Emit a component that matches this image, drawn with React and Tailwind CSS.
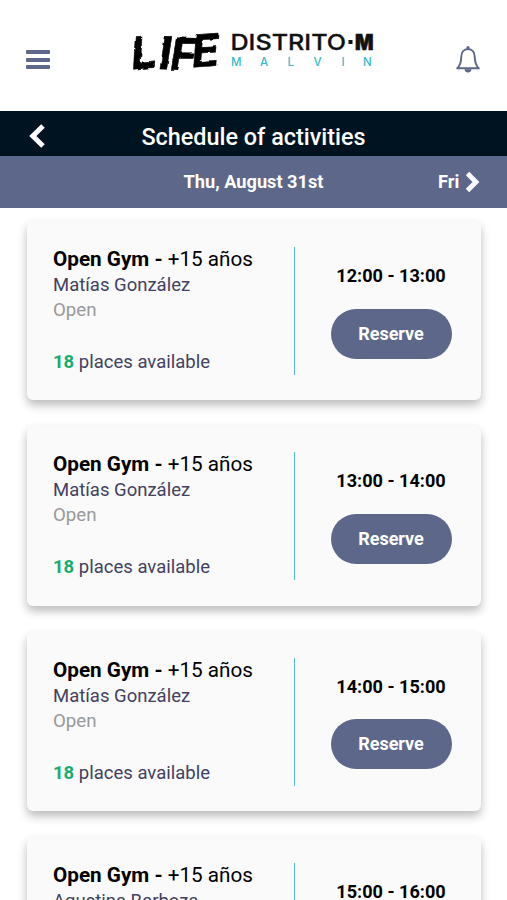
const sessions = [
  { coach: "Matías González", time: "12:00 - 13:00" },
  { coach: "Matías González", time: "13:00 - 14:00" },
  { coach: "Matías González", time: "14:00 - 15:00" },
  { coach: "Agustina Barboza", time: "15:00 - 16:00" },
];

function Logo() {
  return (
    <svg width="248" height="48" viewBox="130 28 248 48" className="overflow-visible">
      <defs>
        <filter id="brush" x="-10%" y="-10%" width="120%" height="120%">
          <feTurbulence type="fractalNoise" baseFrequency="0.12" numOctaves="2" seed="3" result="n" />
          <feDisplacementMap in="SourceGraphic" in2="n" scale="3" xChannelSelector="R" yChannelSelector="G" />
        </filter>
      </defs>
      <g filter="url(#brush)">
        <text
          transform="translate(0 69) skewX(-8)"
          x="130.500 157 168.500 190.500"
          y="0.5 0 1.5 -1.500"
          rotate="-5 1 1 -4"
          fontSize="45"
          fontWeight="700"
          fill="#050505"
          stroke="#050505"
          strokeWidth="0.6"
          strokeLinejoin="round"
          className="font-['Inter',sans-serif]"
        >
          LIFE
        </text>
      </g>
      <text x="230.500" y="49.500" fontSize="21" fontWeight="500" textLength="115.500" lengthAdjust="spacingAndGlyphs" fill="#111" stroke="#111" strokeWidth="0.3" className="font-['Inter',sans-serif]">DISTRITO</text>
      <rect x="348.500" y="40" width="4" height="4" fill="#111" />
      <text x="355" y="49.500" fontSize="21" fontWeight="900" textLength="18.500" lengthAdjust="spacingAndGlyphs" fill="#111" stroke="#111" strokeWidth="0.6" className="font-['Inter',sans-serif]">M</text>
      <text x="231 260 287.500 313.500 341.500 363" y="66" fontSize="11.500" fontWeight="500" fill="#3cb9c6" className="font-['Inter',sans-serif]">MALVIN</text>
    </svg>
  );
}

function SessionCard({ coach, time }) {
  return (
    <article className="flex h-[179.3px] shrink-0 rounded-[6px] bg-[#fafafa] pt-[26px] pl-[26px] shadow-[0_5px_10px_rgba(0,0,0,0.27)]">
      <div className="w-[241px] shrink-0 whitespace-nowrap text-[#42415f]">
        <h2 className="h-[25px] text-[20.7px] leading-[25px] text-black">
          <b className="font-bold">Open Gym - </b>+15 años
        </h2>
        <p className="h-[26px] text-[18.5px] leading-[26px]">{coach}</p>
        <p className="h-[26px] text-[18.7px] leading-[25px] text-[#999]">Open</p>
        <p className="mt-[26px] text-[18.5px] leading-[25px]">
          <b className="font-bold text-[#18ac70]">18</b> places available
        </p>
      </div>
      <div className="h-[128px] w-px shrink-0 bg-[#55bfc3]" />
      <div className="flex flex-1 flex-col items-center pl-[6px]">
        <p className="mt-[16px] text-[18.1px] leading-[25px] font-bold whitespace-nowrap text-black">{time}</p>
        <button className="mt-[20.500px] h-[50px] w-[121px] rounded-full bg-[#5d6789] pb-px text-[18px] font-bold text-white">Reserve</button>
      </div>
    </article>
  );
}

export default function App() {
  return (
    <div className="flex h-[900px] w-full flex-col overflow-hidden bg-white font-['Roboto',sans-serif]">
      <header className="flex h-[111px] shrink-0 items-start justify-between pr-[26px] pl-[26px]">
        <div className="mt-[50px] flex w-6 flex-col gap-[3.5px]">
          <span className="h-[4px] rounded-[1px] bg-[#5d6789]" />
          <span className="h-[4px] rounded-[1px] bg-[#5d6789]" />
          <span className="h-[4px] rounded-[1px] bg-[#5d6789]" />
        </div>
        <div className="mt-7 ml-[3px]">
          <Logo />
        </div>
        <svg className="mt-[45px]" width="26" height="29" viewBox="0 0 26 29" fill="none" stroke="#5d6789" strokeWidth="1.9" strokeLinejoin="round">
          <path d="M2.200 23.300c2.500-2.300 4-5.500 4-11C6.200 7 9 4 13 4s6.800 3 6.800 8.300c0 5.500 1.500 8.700 4 11Z" />
          <path d="M9.500 24.200h7c0 2-1.500 3.200-3.500 3.200s-3.500-1.200-3.500-3.200Z" fill="#5d6789" stroke="none" />
          <circle cx="13" cy="2.700" r="1.600" fill="#5d6789" stroke="none" />
        </svg>
      </header>
      <div className="grid h-[45px] shrink-0 grid-cols-[60px_1fr_60px] items-center bg-[#001321] text-white">
        <svg className="mt-[5px] ml-7" width="18" height="26" viewBox="0 0 18 26" fill="none" stroke="white" strokeWidth="5">
          <path d="M15 3 4.800 13l10.200 10" />
        </svg>
        <h1 className="mt-[6px] text-center text-[23.4px] leading-[28px] font-medium whitespace-nowrap">Schedule of activities</h1>
      </div>
      <nav className="grid h-[52px] shrink-0 grid-cols-[100px_1fr_100px] items-center bg-[#5d6789] text-[18.2px] font-bold text-white">
        <span />
        <span className="text-center whitespace-nowrap">Thu, August 31st</span>
        <span className="flex items-center gap-[6px] pl-[31px]">
          Fri
          <svg width="16" height="22" viewBox="0 0 16 22" fill="none" stroke="white" strokeWidth="4.800">
            <path d="m2.500 2.500 8.500 8.500-8.500 8.500" />
          </svg>
        </span>
      </nav>
      <main className="flex flex-col gap-[26px] pt-[13px] pr-[26px] pl-[27px]">
        {sessions.map((s) => (
          <SessionCard key={s.time} {...s} />
        ))}
      </main>
    </div>
  );
}
